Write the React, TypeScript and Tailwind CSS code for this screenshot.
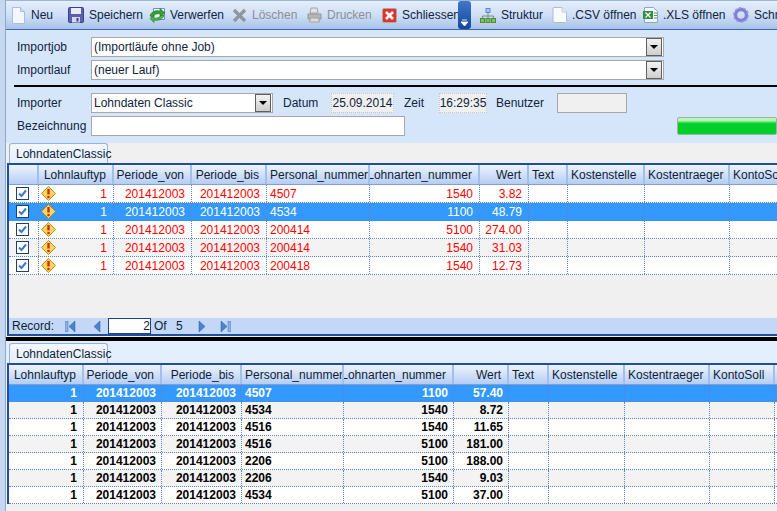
import { ReactNode } from 'react'

const topHeaders = [
  { label: '', right: false },
  { label: 'Lohnlauftyp', right: true },
  { label: 'Periode_von', right: true },
  { label: 'Periode_bis', right: true },
  { label: 'Personal_nummer', right: false },
  { label: 'Lohnarten_nummer', right: true },
  { label: 'Wert', right: true },
  { label: 'Text', right: false },
  { label: 'Kostenstelle', right: false },
  { label: 'Kostentraeger', right: false },
  { label: 'KontoSoll', right: false },
]

const bottomHeaders = topHeaders.slice(1)

const topRows = [
  ['4507', '1540', '3.82'],
  ['4534', '1100', '48.79'],
  ['200414', '5100', '274.00'],
  ['200414', '1540', '31.03'],
  ['200418', '1540', '12.73'],
]

const bottomRows = [
  ['4507', '1100', '57.40'],
  ['4534', '1540', '8.72'],
  ['4516', '1540', '11.65'],
  ['4516', '5100', '181.00'],
  ['2206', '5100', '188.00'],
  ['2206', '1540', '9.03'],
  ['4534', '5100', '37.00'],
]

const topCols = 'grid grid-cols-[30px_75px_78px_75px_103px_110px_49px_39px_77px_85px_85px]'
const bottomCols = 'grid grid-cols-[75px_78px_80px_102px_110px_55px_40px_76px_85px_65px_60px]'

function NewIcon() {
  return (
    <svg width="14" height="17" viewBox="0 0 14 17">
      <path d="M1.5.5h8l4 4v12h-12z" fill="#f4f8fe" stroke="#a9bfdc" />
      <path d="M9.5.5v4h4" fill="#cfe0f5" stroke="#a9bfdc" />
    </svg>
  )
}

function SaveIcon() {
  return (
    <svg width="16" height="16" viewBox="0 0 16 16">
      <rect x=".5" y=".5" width="15" height="15" rx="1" fill="#5a5fb0" stroke="#3c3f86" />
      <rect x="3" y="1" width="10" height="6" fill="#e8ecf6" />
      <rect x="4" y="10" width="8" height="5.5" fill="#d5d8e6" />
      <rect x="8.5" y="11" width="2" height="3.5" fill="#3c3f86" />
    </svg>
  )
}

function DiscardIcon() {
  return (
    <svg width="17" height="16" viewBox="0 0 17 16">
      <path d="M4.5 1.5h11v11h-11z" fill="#f3f7fd" stroke="#6f92c4" />
      <path d="M1 9c1-4 5-6 10-5V1.5L16 6l-5 3.5V7C8 6.5 5.5 7 4 10z" fill="#2fa52f" stroke="#1b701b" strokeWidth=".6" />
      <path d="M15 8c-1 4-5 6-10 5v2.5L1 11.5 5 8.5V11c3 .5 5-.5 7-2.5z" fill="#46b946" stroke="#1b701b" strokeWidth=".6" />
    </svg>
  )
}

function DeleteIcon() {
  return (
    <svg width="15" height="15" viewBox="0 0 15 15">
      <path d="M2 2l11 11M13 2L2 13" stroke="#8f959c" strokeWidth="3.2" />
    </svg>
  )
}

function PrintIcon() {
  return (
    <svg width="15" height="16" viewBox="0 0 15 16">
      <path d="M4 1h6l1 5H3z" fill="#e3e3e3" stroke="#a3a3a3" />
      <path d="M1 7h13v5H1z" fill="#b4b6b8" stroke="#949494" />
      <path d="M3.500 11h8l1 4h-10z" fill="#dcdcdc" stroke="#a3a3a3" />
    </svg>
  )
}

function CloseIcon() {
  return (
    <svg width="15" height="15" viewBox="0 0 15 15">
      <rect x=".5" y=".5" width="14" height="14" rx="1.500" fill="#e2332a" stroke="#a8a8a8" />
      <path d="M4 4l7 7M11 4l-7 7" stroke="#fff" strokeWidth="2.600" />
    </svg>
  )
}

function TreeIcon() {
  return (
    <svg width="16" height="15" viewBox="0 0 16 15">
      <rect x="6" y=".5" width="4" height="4" fill="#a8c8f0" stroke="#5b8bc8" />
      <path d="M8 5v3M2.500 10V8h11v2M8 8v2" stroke="#7a8a9c" fill="none" />
      <rect x=".5" y="10.500" width="4" height="4" fill="#7cc35a" stroke="#4c8c34" />
      <rect x="6" y="10.500" width="4" height="4" fill="#7cc35a" stroke="#4c8c34" />
      <rect x="11.500" y="10.500" width="4" height="4" fill="#7cc35a" stroke="#4c8c34" />
    </svg>
  )
}

function CsvIcon() {
  return (
    <svg width="15" height="16" viewBox="0 0 15 16">
      <path d="M1 1.500q0-1 1-1h8l4.500 4.500v9.500q0 1-1 1h-11.500q-1 0-1-1z" fill="#f8fbff" stroke="#aebccb" />
      <path d="M10 .5v4.500h4.500" fill="#e3ebf5" stroke="#c3cedb" />
    </svg>
  )
}

function XlsIcon() {
  return (
    <svg width="15" height="16" viewBox="0 0 15 16">
      <path d="M1.500.5h9l4 4v11h-13z" fill="#f5f9fd" stroke="#8ea6c0" />
      <rect x="0" y="4" width="10" height="8" fill="#2f8f3c" />
      <path d="M2.500 5.500l5 5M7.500 5.500l-5 5" stroke="#fff" strokeWidth="1.300" />
      <path d="M11 6h3M11 8.500h3M11 11h3" stroke="#4f9f5a" />
    </svg>
  )
}

function GearIcon() {
  return (
    <svg width="16" height="16" viewBox="0 0 16 16">
      <circle cx="8" cy="8" r="5.500" fill="none" stroke="#7f7fd6" strokeWidth="3.400" />
      <circle cx="8" cy="8" r="7.200" fill="none" stroke="#9c9ce0" strokeWidth="1.600" strokeDasharray="2.500 2" />
    </svg>
  )
}

function ComboArrow() {
  return (
    <span className="flex h-[18px] w-[16px] items-center justify-center border border-[#5f5f5f] bg-gradient-to-b from-[#f2f2f2] to-[#cfcfcf]">
      <svg width="8" height="4" viewBox="0 0 8 4">
        <path d="M0 0h8L4 4z" fill="#000" />
      </svg>
    </span>
  )
}

function CheckBox() {
  return (
    <svg width="13" height="13" viewBox="0 0 13 13">
      <rect x=".5" y=".5" width="12" height="12" fill="#fff" stroke="#1f3f6f" />
      <path d="M3 6.500l2.500 2.500L10 3.500" fill="none" stroke="#3c78c8" strokeWidth="2" />
    </svg>
  )
}

function WarnIcon() {
  return (
    <svg width="15" height="15" viewBox="0 0 15 15">
      <path d="M7.500.5l7 7-7 7-7-7z" fill="#fbd75a" stroke="#b98a1c" />
      <path d="M7.500 3v5.500" stroke="#d8241c" strokeWidth="2.400" />
      <circle cx="7.500" cy="11" r="1.300" fill="#d8241c" />
    </svg>
  )
}

function ToolButton({ icon, label, disabled, width }: { icon: ReactNode; label: string; disabled?: boolean; width: string }) {
  return (
    <div className={`flex h-full shrink-0 items-center ${width}`}>
      <span className="flex w-[24px] shrink-0 items-center justify-center">{icon}</span>
      <span className={`ml-[-1px] whitespace-nowrap pl-[2px] ${disabled ? 'text-[#8d8f93]' : 'text-[#10233f]'}`}>{label}</span>
    </div>
  )
}

function Combo({ value, width }: { value: string; width: string }) {
  return (
    <div className={`flex h-[20px] items-center justify-between border border-[#a8a8a8] bg-white pl-[2px] pr-px ${width}`}>
      <span>{value}</span>
      <ComboArrow />
    </div>
  )
}

function ReadOnly({ value, width }: { value: string; width: string }) {
  return (
    <div className={`flex h-[20px] items-center justify-center border border-dotted border-[#c8c8c8] bg-[#f0f0f0] ${width}`}>
      {value}
    </div>
  )
}

function HeaderRow({ cols, headers }: { cols: string; headers: { label: string; right: boolean }[] }) {
  return (
    <div className={`${cols} h-[20px] border-b border-[#7f9fd6] bg-gradient-to-b from-[#eef4fe] to-[#b5cdf3]`}>
      {headers.map((h, i) => (
        <div
          key={i}
          className={`flex items-center overflow-hidden whitespace-nowrap border-r-2 border-r-[#a3bfe8] pl-[3px] pr-[6px] text-[#0f1e38] ${
            h.right ? 'justify-end' : 'justify-start'
          }`}
        >
          {h.label}
        </div>
      ))}
    </div>
  )
}

const cell = 'flex items-center overflow-hidden whitespace-nowrap border-r border-dotted border-r-[#5b85c8]'

function TopRow({ row, index }: { row: string[]; index: number }) {
  const selected = index === 1
  const bg = selected ? 'bg-[#3399ff] text-white' : index === 3 ? 'bg-[#f3f3f3] text-[#ff0000]' : 'bg-white text-[#ff0000]'
  return (
    <div className={`${topCols} h-[18px] border-b border-dotted border-b-[#5b85c8] ${bg}`}>
      <div className={`${cell} justify-center pr-[3px]`}>
        <CheckBox />
      </div>
      <div className={`${cell} justify-between pl-[2px] pr-[6px]`}>
        <WarnIcon />
        <span>1</span>
      </div>
      <div className={`${cell} justify-end pr-[6px]`}>201412003</div>
      <div className={`${cell} justify-end pr-[6px]`}>201412003</div>
      <div className={`${cell} pl-[3px]`}>{row[0]}</div>
      <div className={`${cell} justify-end pr-[6px]`}>{row[1]}</div>
      <div className={`${cell} justify-end pr-[6px]`}>{row[2]}</div>
      <div className={cell} />
      <div className={cell} />
      <div className={cell} />
      <div className={cell} />
    </div>
  )
}

function BottomRow({ row, index }: { row: string[]; index: number }) {
  const bg = index === 0 ? 'bg-[#3399ff] text-white' : index % 2 === 1 ? 'bg-[#f3f3f3] text-black' : 'bg-white text-black'
  return (
    <div className={`${bottomCols} h-[17px] border-b border-dotted border-b-[#5b85c8] font-bold ${bg}`}>
      <div className={`${cell} justify-end pr-[6px]`}>1</div>
      <div className={`${cell} justify-end pr-[5px]`}>201412003</div>
      <div className={`${cell} justify-end pr-[5px]`}>201412003</div>
      <div className={`${cell} pl-[3px]`}>{row[0]}</div>
      <div className={`${cell} justify-end pr-[5px]`}>{row[1]}</div>
      <div className={`${cell} justify-end pr-[5px]`}>{row[2]}</div>
      <div className={cell} />
      <div className={cell} />
      <div className={cell} />
      <div className={cell} />
      <div />
    </div>
  )
}

function Tab() {
  return (
    <div className="ml-[3px] flex h-[20px] w-[99px] items-center rounded-t-[3px] border border-b-0 border-[#8db4e2] bg-gradient-to-b from-[#f4f8fe] to-[#e6effc] pl-[6px]">
      LohndatenClassic
    </div>
  )
}

function NavTriangle({ dir, bar }: { dir: 'left' | 'right'; bar?: boolean }) {
  return (
    <svg width="11" height="11" viewBox="0 0 11 11">
      {dir === 'left' ? (
        <>
          {bar && <rect x="0" y="0" width="3" height="11" fill="#8fb0e6" stroke="#3f6fb8" strokeWidth=".5" />}
          <path d="M10 0v11L4 5.500z" fill="#4f82cc" stroke="#2c5aa0" strokeWidth=".5" />
        </>
      ) : (
        <>
          <path d="M1 0v11l6-5.500z" fill="#4f82cc" stroke="#2c5aa0" strokeWidth=".5" />
          {bar && <rect x="8" y="0" width="3" height="11" fill="#8fb0e6" stroke="#3f6fb8" strokeWidth=".5" />}
        </>
      )}
    </svg>
  )
}

export default function App() {
  return (
    <div className="flex h-[511px] w-[777px] overflow-hidden bg-[#f0f0f0] font-['Liberation_Sans',sans-serif] text-[12px] leading-none text-[#10233f]">
      <div className="w-[6px] shrink-0 border-r border-[#8fa6c6] bg-[#c6d8f0]" />

      <div className="flex min-w-0 flex-1 flex-col">
        <div className="flex h-[30px] shrink-0 items-center border-y border-t-[#9db4d4] border-b-[#3f69a8] bg-gradient-to-b from-[#e4eefc] via-[#cfdff6] to-[#a8c3ea]">
          <ToolButton icon={<NewIcon />} label="Neu" width="w-[58px]" />
          <ToolButton icon={<SaveIcon />} label="Speichern" width="w-[81px]" />
          <ToolButton icon={<DiscardIcon />} label="Verwerfen" width="w-[82px]" />
          <ToolButton icon={<DeleteIcon />} label="Löschen" width="w-[75px]" disabled />
          <ToolButton icon={<PrintIcon />} label="Drucken" width="w-[75px]" disabled />
          <ToolButton icon={<CloseIcon />} label="Schliessen" width="w-[81px]" />
          <div className="flex h-full w-[13px] shrink-0 items-end justify-center rounded-[3px] bg-gradient-to-b from-[#3f78c8] to-[#16469a] pb-[3px]">
            <svg width="7" height="7" viewBox="0 0 7 7">
              <path d="M1 1h5M0 3h7l-3.500 4z" stroke="#fff" strokeWidth=".8" fill="#fff" />
            </svg>
          </div>
          <div className="w-[5px] shrink-0" />
          <ToolButton icon={<TreeIcon />} label="Struktur" width="w-[71px]" />
          <ToolButton icon={<CsvIcon />} label=".CSV öffnen" width="w-[91px]" />
          <ToolButton icon={<XlsIcon />} label=".XLS öffnen" width="w-[91px]" />
          <ToolButton icon={<GearIcon />} label="Schnittstelle" width="w-[100px]" />
        </div>

        <div className="flex h-[113px] shrink-0 flex-col bg-[#d6e6fa] pl-[8px]">
          <div className="mt-[7px] flex flex-col gap-[3px] pl-[3px]">
            <div className="flex items-center">
              <span className="w-[74px] shrink-0">Importjob</span>
              <Combo value="(Importläufe ohne Job)" width="w-[573px]" />
            </div>
            <div className="flex items-center">
              <span className="w-[74px] shrink-0">Importlauf</span>
              <Combo value="(neuer Lauf)" width="w-[573px]" />
            </div>
          </div>

          <div className="mt-[5px] h-[2px] shrink-0 bg-black" />

          <div className="mt-[6px] flex items-center pl-[3px]">
            <span className="w-[74px] shrink-0">Importer</span>
            <Combo value="Lohndaten Classic" width="w-[182px]" />
            <span className="ml-[10px] w-[48px] shrink-0">Datum</span>
            <ReadOnly value="25.09.2014" width="w-[63px]" />
            <span className="ml-[10px] w-[35px] shrink-0">Zeit</span>
            <ReadOnly value="16:29:35" width="w-[48px]" />
            <span className="ml-[9px] w-[61px] shrink-0">Benutzer</span>
            <div className="h-[20px] w-[70px] border border-[#a8a8a8] bg-[#f0f0f0]" />
          </div>

          <div className="mt-[3px] flex items-center pl-[3px]">
            <span className="w-[74px] shrink-0">Bezeichnung</span>
            <div className="h-[20px] w-[322px] border border-[#a8a8a8] bg-white" />
            <div className="ml-[272px] h-[18px] w-[100px] shrink-0 rounded-[2px] border border-[#9cb49c] bg-[linear-gradient(to_bottom,#b8f5b8_0%,#b8f5b8_15%,#00cf2a_35%,#00cf2a_100%)]" />
          </div>
        </div>

        <div className="flex h-[20px] shrink-0 items-end bg-[#f0f0f0]">
          <Tab />
        </div>

        <div className="ml-px flex h-[173px] shrink-0 flex-col overflow-hidden border-y-2 border-l-2 border-y-[#1f4f9c] border-l-[#1f4f9c] border-t-[#1f4f9c]">
          <HeaderRow cols={topCols} headers={topHeaders} />
          {topRows.map((row, i) => (
            <TopRow key={i} row={row} index={i} />
          ))}
          <div className="flex-1" />
          <div className="flex h-[16px] shrink-0 items-center bg-[#c2d8f6] pl-[3px] text-[#0f1e38]">
            <span className="w-[53px]">Record:</span>
            <NavTriangle dir="left" bar />
            <span className="w-[14px]" />
            <NavTriangle dir="left" />
            <span className="w-[7px]" />
            <div className="flex h-[16px] w-[43px] items-center justify-end border border-[#1f3f8c] bg-white">2</div>
            <span className="ml-[3px] w-[22px]">Of</span>
            <span className="w-[22px]">5</span>
            <NavTriangle dir="right" />
            <span className="w-[11px]" />
            <NavTriangle dir="right" bar />
          </div>
        </div>

        <div className="mt-px h-[4px] shrink-0 bg-black" />

        <div className="flex h-[22px] shrink-0 items-end bg-[#e3eeff]">
          <Tab />
        </div>

        <div className="ml-px flex shrink-0 flex-col overflow-hidden border-l-2 border-t-2 border-[#1f4f9c]">
          <HeaderRow cols={bottomCols} headers={bottomHeaders} />
          {bottomRows.map((row, i) => (
            <BottomRow key={i} row={row} index={i} />
          ))}
        </div>
      </div>
    </div>
  )
}
